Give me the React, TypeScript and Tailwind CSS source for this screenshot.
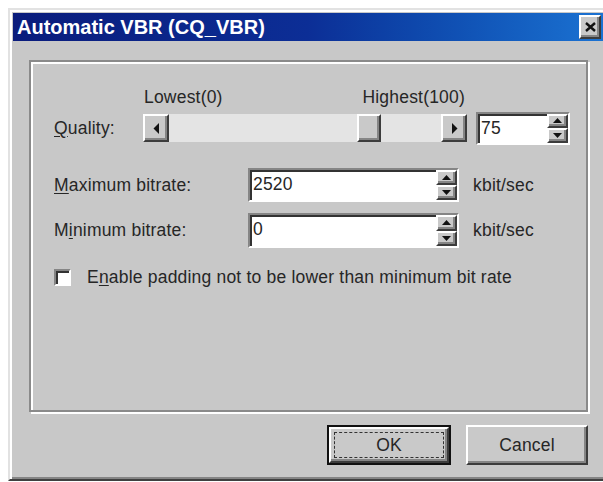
import type { ReactNode } from "react";

const raised =
    "border-2 border-t-white border-l-white border-r-[#3c3c3c] border-b-[#3c3c3c] shadow-[inset_-2px_-2px_0_#858585] bg-[#c9c9c9]";
const sunken =
    "border-2 border-t-[#858585] border-l-[#858585] border-r-white border-b-white shadow-[inset_2px_2px_0_#333]";

type Dir = "left" | "right" | "up" | "down";

const Arrow = ({ dir }: { dir: Dir }) => {
    if (dir === "left" || dir === "right") {
        return (
            <svg width="7" height="11" viewBox="0 0 7 11">
                <polygon points={dir === "left" ? "6,0 6,11 0.5,5.5" : "1,0 1,11 6.5,5.5"} fill="#111" />
            </svg>
        );
    }
    return (
        <svg width="9" height="5" viewBox="0 0 9 5">
            <polygon points={dir === "up" ? "0,5 9,5 4.5,0" : "0,0 9,0 4.5,5"} fill="#111" />
        </svg>
    );
};

// up/down buttons glued to the right side of an edit box
const Spinner = () => (
    <div className="flex h-full w-[21px] flex-col">
        <div className={`${raised} flex flex-1 items-center justify-center`}>
            <Arrow dir="up" />
        </div>
        <div className={`${raised} flex flex-1 items-center justify-center`}>
            <Arrow dir="down" />
        </div>
    </div>
);

const SpinEdit = ({ value, className }: { value: string; className: string }) => (
    <div className={`${sunken} flex bg-white ${className}`}>
        <span className="flex-1 pl-[3px] leading-[28px]">{value}</span>
        <Spinner />
    </div>
);

const Slider = ({ value }: { value: number }) => {
    const trackWidth = 272;
    const thumbWidth = 24;
    const offset = Math.round(((trackWidth - thumbWidth) * value) / 100) + 2;

    return (
        <div className="flex h-[28px] w-[324px]">
            <div className={`${raised} flex w-[26px] items-center justify-center`}>
                <Arrow dir="left" />
            </div>
            <div className="flex w-[272px] bg-[#e4e4e4]">
                <div className={`${raised} h-full w-[24px]`} style={{ marginLeft: offset }} />
            </div>
            <div className={`${raised} flex w-[26px] items-center justify-center`}>
                <Arrow dir="right" />
            </div>
        </div>
    );
};

const Mnemonic = ({ children }: { children: ReactNode }) => <span className="underline underline-offset-2">{children}</span>;

const App = () => {
    return (
        <div className="h-[482px] w-[603px] overflow-hidden bg-white pl-[8px] pt-[8px] font-['Liberation_Sans',Arial,sans-serif] text-[17.5px] tracking-[0.2px] text-[#262626]">
            <div className="flex h-[473px] w-[600px] flex-col border-2 border-t-[#e2e2e2] border-l-[#e2e2e2] border-r-[#404040] border-b-[#404040] bg-[#c8c8c8] p-[3px] shadow-[inset_2px_2px_0_white,inset_-2px_-2px_0_#858585]">
                {/* title bar */}
                <div className="flex h-[28px] items-center justify-between bg-gradient-to-r from-[#0a1c7c] via-[#0c2e96] to-[#1b72d2] pl-[4px] pr-[2px]">
                    <span className="text-[20px] font-bold tracking-normal text-white">Automatic VBR (CQ_VBR)</span>
                    <div className={`${raised} flex h-[24px] w-[22px] items-center justify-center`}>
                        <svg width="11" height="10" viewBox="0 0 11 10">
                            <path d="M1 1 L10 9 M10 1 L1 9" stroke="#111" strokeWidth="2.4" />
                        </svg>
                    </div>
                </div>

                <div className="flex flex-col pl-[16px] pt-[19px]">
                    {/* settings group */}
                    <div className="flex h-[352px] w-[559px] flex-col border-2 border-[#8a8a8a] pl-[23px] pt-[25px] shadow-[inset_2px_2px_0_white,2px_2px_0_white]">
                        <div className="flex h-[20px] items-center">
                            <div className="w-[90px]" />
                            <div className="flex w-[323px] justify-between pr-[2px]">
                                <span>Lowest(0)</span>
                                <span>Highest(100)</span>
                            </div>
                        </div>

                        <div className="mt-[6px] flex h-[30px] items-center">
                            <span className="w-[89px]">
                                <Mnemonic>Q</Mnemonic>uality:
                            </span>
                            <Slider value={75} />
                            <SpinEdit value="75" className="ml-[9px] h-[33px] w-[94px]" />
                        </div>

                        <div className="mt-[25px] flex h-[34px] items-center">
                            <span className="w-[194px]">
                                <Mnemonic>M</Mnemonic>aximum bitrate:
                            </span>
                            <SpinEdit value="2520" className="h-[34px] w-[211px]" />
                            <span className="ml-[14px]">kbit/sec</span>
                        </div>

                        <div className="mt-[11px] flex h-[35px] items-center">
                            <span className="w-[194px]">
                                M<Mnemonic>i</Mnemonic>nimum bitrate:
                            </span>
                            <SpinEdit value="0" className="h-[35px] w-[211px]" />
                            <span className="ml-[14px]">kbit/sec</span>
                        </div>

                        <div className="mt-[20px] flex h-[18px] items-center">
                            <div className={`${sunken} h-[17px] w-[17px] bg-white`} />
                            <span className="ml-[16px]">
                                E<Mnemonic>n</Mnemonic>able padding not to be lower than minimum bit rate
                            </span>
                        </div>
                    </div>

                    <div className="mt-[13px] flex w-[559px] justify-end gap-[15px]">
                        <div className="h-[40px] w-[124px] border-2 border-[#111]">
                            <div className={`${raised} flex h-full items-center justify-center p-[3px]`}>
                                <div className="flex h-full w-full items-center justify-center border border-dashed border-[#333]">
                                    OK
                                </div>
                            </div>
                        </div>
                        <div className={`${raised} flex h-[40px] w-[122px] items-center justify-center`}>Cancel</div>
                    </div>
                </div>
            </div>
        </div>
    );
};

export default App;
